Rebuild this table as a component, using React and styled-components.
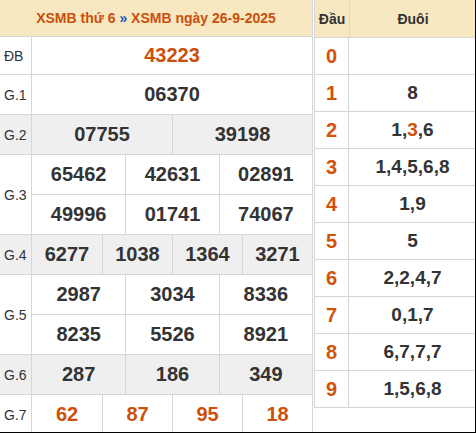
import React from "react";
import styled, { createGlobalStyle } from "styled-components";

const GlobalStyle = createGlobalStyle`
  html, body {
    margin: 0;
    padding: 0;
    background: #fff;
  }
  body {
    font-family: "Liberation Sans", Arial, sans-serif;
    color: #333;
  }
`;

const prizes = [
  { label: "ĐB", lines: [["43223"]], tone: "special", short: true },
  { label: "G.1", lines: [["06370"]] },
  { label: "G.2", lines: [["07755", "39198"]], gray: true },
  { label: "G.3", lines: [["65462", "42631", "02891"], ["49996", "01741", "74067"]] },
  { label: "G.4", lines: [["6277", "1038", "1364", "3271"]], gray: true },
  { label: "G.5", lines: [["2987", "3034", "8336"], ["8235", "5526", "8921"]] },
  { label: "G.6", lines: [["287", "186", "349"]], gray: true },
  { label: "G.7", lines: [["62", "87", "95", "18"]], tone: "special" },
];

const heads = [
  { d: "0", t: [] },
  { d: "1", t: ["8"] },
  { d: "2", t: ["1", "3", "6"], hot: 1 },
  { d: "3", t: ["1", "4", "5", "6", "8"] },
  { d: "4", t: ["1", "9"] },
  { d: "5", t: ["5"] },
  { d: "6", t: ["2", "2", "4", "7"] },
  { d: "7", t: ["0", "1", "7"] },
  { d: "8", t: ["6", "7", "7", "7"] },
  { d: "9", t: ["1", "5", "6", "8"] },
];

const App = () => {
  return (
    <>
      <GlobalStyle />
      <Frame>
        <Results>
          <Title>
            XSMB thứ 6 <Arrow>»</Arrow> XSMB ngày 26-9-2025
          </Title>
          {prizes.map((p) => (
            <Prize key={p.label} $gray={p.gray}>
              <Label>{p.label}</Label>
              <Lines>
                {p.lines.map((line, i) => (
                  <Line key={i} $count={line.length} $short={p.short}>
                    {line.map((n, j) => (
                      <Number key={j} $tone={p.tone}>
                        {n}
                      </Number>
                    ))}
                  </Line>
                ))}
              </Lines>
            </Prize>
          ))}
        </Results>
        <Loto>
          <LotoHead>
            <HeadCell>Đầu</HeadCell>
            <HeadCell>Đuôi</HeadCell>
          </LotoHead>
          {heads.map((h) => (
            <LotoRow key={h.d}>
              <Digit>{h.d}</Digit>
              <Tails>
                {h.t.map((x, i) => (
                  <React.Fragment key={i}>
                    {i > 0 && ","}
                    {i === h.hot ? <Hot>{x}</Hot> : x}
                  </React.Fragment>
                ))}
              </Tails>
            </LotoRow>
          ))}
        </Loto>
      </Frame>
    </>
  );
};

const Frame = styled.div`
  width: 476px;
  height: 433px;
  box-sizing: border-box;
  border-right: 1px solid #000;
  border-bottom: 1px solid #000;
  overflow: hidden;
  display: flex;
  align-items: flex-start;
  gap: 1px;
`;

const Results = styled.div`
  width: 313px;
  flex-shrink: 0;
  border-right: 1px solid #d6d6d6;
  box-sizing: border-box;
`;

const Title = styled.div`
  height: 36px;
  border-bottom: 1px solid #d6d6d6;
  background: #f8e8c1;
  display: flex;
  align-items: center;
  justify-content: center;
  font-size: 14px;
  font-weight: bold;
  color: #c8500c;
  white-space: pre;
`;

const Arrow = styled.span`
  color: #1b5bb5;
`;

const Prize = styled.div`
  display: flex;
  background: ${(p) => (p.$gray ? "#efefef" : "#fff")};
`;

const Label = styled.div`
  width: 32px;
  flex-shrink: 0;
  border-right: 1px solid #d6d6d6;
  border-bottom: 1px solid #d6d6d6;
  display: flex;
  align-items: center;
  padding-left: 4px;
  box-sizing: border-box;
  font-size: 14px;
  color: #333;
`;

const Lines = styled.div`
  flex: 1;
  display: flex;
  flex-direction: column;
`;

const Line = styled.div`
  height: ${(p) => (p.$short ? "37px" : "39px")};
  border-bottom: 1px solid #d6d6d6;
  display: grid;
  grid-template-columns: repeat(${(p) => p.$count}, 1fr);
`;

const Number = styled.div`
  display: flex;
  align-items: center;
  justify-content: center;
  font-size: 20px;
  font-weight: bold;
  color: ${(p) => (p.$tone === "special" ? "#cc4f0b" : "#333")};
  & + & {
    border-left: 1px solid #d6d6d6;
  }
`;

const Loto = styled.div`
  width: 161px;
  flex-shrink: 0;
  border-left: 1px solid #d6d6d6;
`;

const LotoHead = styled.div`
  height: 37px;
  display: grid;
  grid-template-columns: 34px 1fr;
  background: #f8e8c1;
  border-bottom: 1px solid #d6d6d6;
`;

const HeadCell = styled.div`
  display: flex;
  align-items: center;
  justify-content: center;
  font-size: 14px;
  font-weight: bold;
  color: #333;
  & + & {
    border-left: 1px solid #d6d6d6;
  }
`;

const LotoRow = styled.div`
  height: 36px;
  display: grid;
  grid-template-columns: 34px 1fr;
  border-bottom: 1px solid #d6d6d6;
`;

const Digit = styled.div`
  display: flex;
  align-items: center;
  justify-content: center;
  font-size: 20px;
  font-weight: bold;
  color: #d3520a;
  border-right: 1px solid #d6d6d6;
`;

const Tails = styled.div`
  display: flex;
  align-items: center;
  justify-content: center;
  font-size: 19px;
  font-weight: bold;
  color: #333;
`;

const Hot = styled.span`
  color: #d3520a;
`;

export default App;
